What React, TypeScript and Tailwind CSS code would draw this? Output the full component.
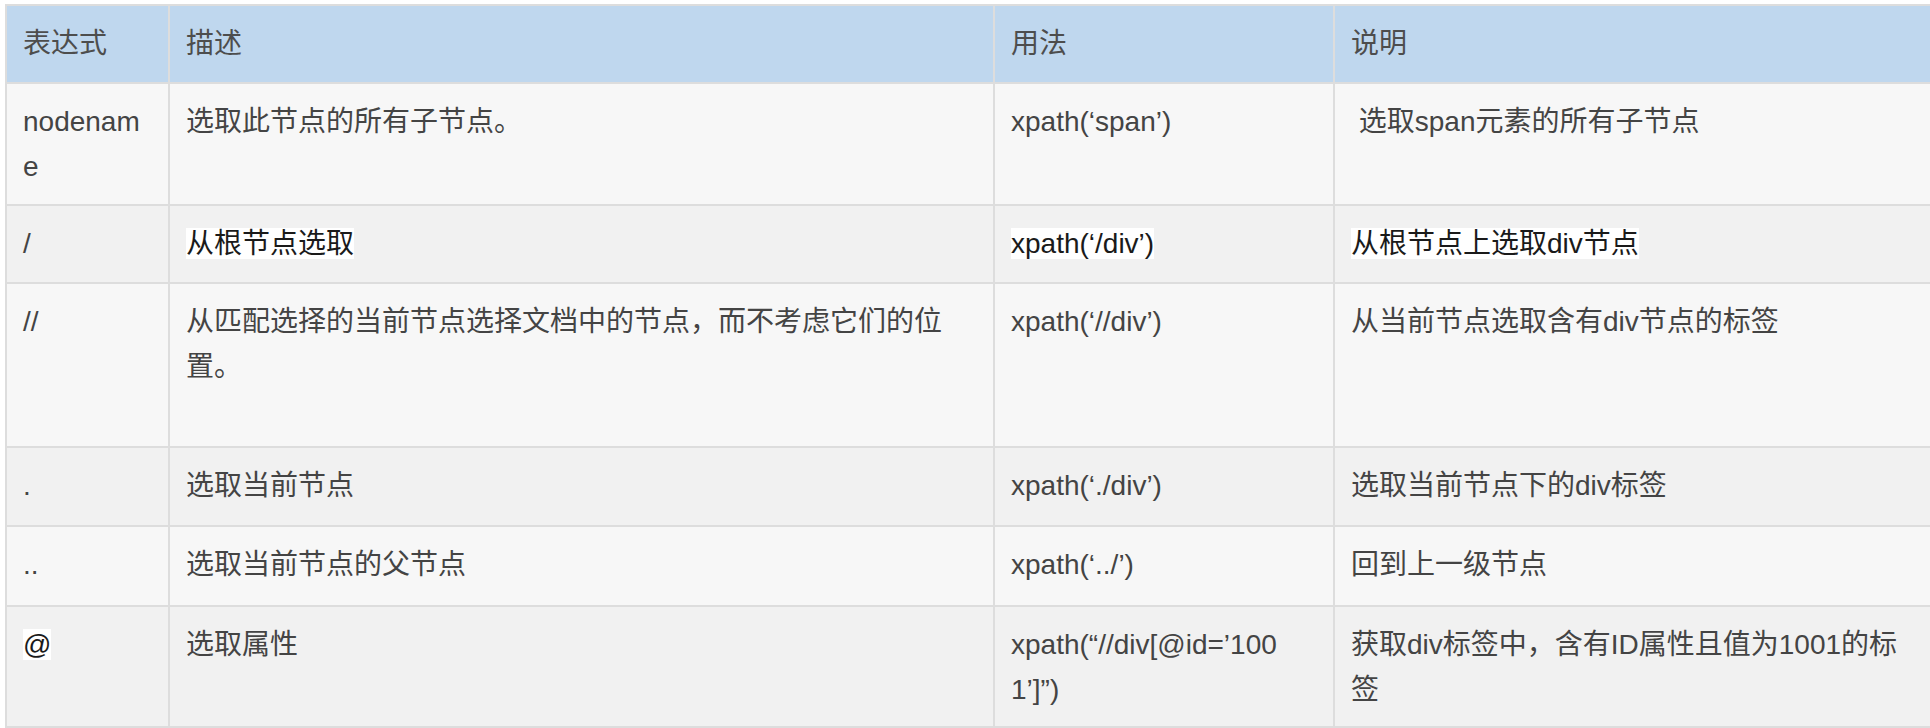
import React from 'react';

type Cell = { text: React.ReactNode; hl?: boolean };
type Row = { h: string; cells: Cell[] };

const rows: Row[] = [
  {
    h: 'h-[122px]',
    cells: [
      { text: 'nodename' },
      { text: '选取此节点的所有子节点。' },
      { text: 'xpath(‘span’)' },
      { text: '\u00a0选取span元素的所有子节点' },
    ],
  },
  {
    h: 'h-[78px]',
    cells: [
      { text: '/' },
      { text: '从根节点选取', hl: true },
      { text: 'xpath(‘/div’)', hl: true },
      { text: '从根节点上选取div节点', hl: true },
    ],
  },
  {
    h: 'h-[164px]',
    cells: [
      { text: '//' },
      { text: '从匹配选择的当前节点选择文档中的节点，而不考虑它们的位置。' },
      { text: 'xpath(‘//div’)' },
      { text: '从当前节点选取含有div节点的标签' },
    ],
  },
  {
    h: 'h-[79px]',
    cells: [
      { text: '.' },
      { text: '选取当前节点' },
      { text: 'xpath(‘./div’)' },
      { text: '选取当前节点下的div标签' },
    ],
  },
  {
    h: 'h-[80px]',
    cells: [
      { text: '..' },
      { text: '选取当前节点的父节点' },
      { text: 'xpath(‘../’)' },
      { text: '回到上一级节点' },
    ],
  },
  {
    h: 'h-[121px]',
    cells: [
      { text: '@', hl: true },
      { text: '选取属性' },
      { text: 'xpath(“//div[@id=’1001’]”)' },
      { text: '获取div标签中，含有ID属性且值为1001的标签' },
    ],
  },
];

const headers = ['表达式', '描述', '用法', '说明'];

export default function App() {
  return (
    <div className="w-[1930px] h-[728px] bg-white pt-[4px] pl-[5px] overflow-hidden font-['Liberation_Sans','Noto_Sans_CJK_SC',sans-serif] text-[28px] leading-[1.6] text-[#444]">
      <table className="w-[1925px] table-fixed border-collapse border-2 border-[#dddddd]">
        <colgroup>
          <col className="w-[163px]" />
          <col className="w-[825px]" />
          <col className="w-[340px]" />
          <col className="w-[597px]" />
        </colgroup>
        <thead>
          <tr className="h-[78px] bg-[#bfd7ee]">
            {headers.map((h) => (
              <th
                key={h}
                className="border-2 border-[#dddddd] px-[16px] pt-[16px] pb-[8px] text-left align-top font-normal text-[#4d4d4d]"
              >
                {h}
              </th>
            ))}
          </tr>
        </thead>
        <tbody>
          {rows.map((row, i) => (
            <tr key={i} className={`${row.h} ${i % 2 === 0 ? 'bg-[#f7f7f7]' : 'bg-[#f1f1f1]'}`}>
              {row.cells.map((c, j) => (
                <td
                  key={j}
                  className="border-2 border-[#dddddd] px-[16px] pt-[16px] pb-[8px] align-top break-all"
                >
                  {c.hl ? (
                    <span className="bg-white text-[#1a1a1a]">{c.text}</span>
                  ) : j === 2 ? (
                    <div className="max-w-[275px]">{c.text}</div>
                  ) : (
                    c.text
                  )}
                </td>
              ))}
            </tr>
          ))}
        </tbody>
      </table>
    </div>
  );
}
